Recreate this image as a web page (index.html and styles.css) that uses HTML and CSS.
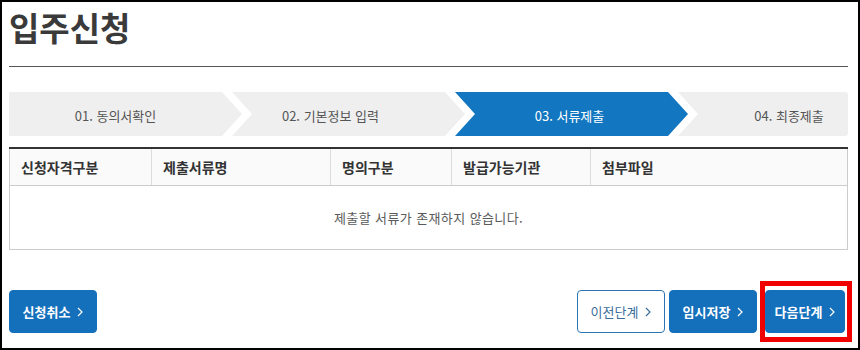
FILE: index.html
```html
<!DOCTYPE html>
<html lang="ko">
<head>
<meta charset="utf-8">
<title>입주신청</title>
<link rel="stylesheet" href="styles.css">
</head>
<body>
<div class="frame">
  <h1 class="title">입주신청</h1>
  <div class="rule"></div>

  <ol class="steps">
    <li class="step step-1"><span>01. 동의서확인</span></li>
    <li class="step step-2"><span>02. 기본정보 입력</span></li>
    <li class="step step-3 is-active"><span>03. 서류제출</span></li>
    <li class="step step-4"><span>04. 최종제출</span></li>
  </ol>

  <table class="docs">
    <colgroup>
      <col class="c1"><col class="c2"><col class="c3"><col class="c4"><col class="c5">
    </colgroup>
    <thead>
      <tr>
        <th>신청자격구분</th>
        <th>제출서류명</th>
        <th>명의구분</th>
        <th>발급가능기관</th>
        <th>첨부파일</th>
      </tr>
    </thead>
    <tbody>
      <tr>
        <td colspan="5" class="empty">제출할 서류가 존재하지 않습니다.</td>
      </tr>
    </tbody>
  </table>

  <div class="actions">
    <button class="btn btn-primary">신청취소<svg class="chev" viewBox="0 0 6 10"><path d="M1 1l4 4-4 4"/></svg></button>
    <div class="actions-right">
      <button class="btn btn-outline">이전단계<svg class="chev" viewBox="0 0 6 10"><path d="M1 1l4 4-4 4"/></svg></button>
      <button class="btn btn-primary">임시저장<svg class="chev" viewBox="0 0 6 10"><path d="M1 1l4 4-4 4"/></svg></button>
      <div class="highlight-wrap">
        <button class="btn btn-primary btn-next">다음단계<svg class="chev" viewBox="0 0 6 10"><path d="M1 1l4 4-4 4"/></svg></button>
        <div class="highlight"></div>
      </div>
    </div>
  </div>
</div>
</body>
</html>
```

FILE: styles.css
```css
html, body {
  margin: 0;
  padding: 0;
  background: #fff;
}

body {
  font-family: "Noto Sans CJK KR", "Noto Sans", sans-serif;
  color: #333;
}

.frame {
  box-sizing: border-box;
  width: 860px;
  height: 350px;
  border: 2px solid #000;
  padding: 0 10px 0 7px;
  position: relative;
  overflow: hidden;
}

.title {
  margin: 5px 0 0 0;
  font-size: 33px;
  line-height: 40px;
  font-weight: 700;
  color: #3a3a3a;
}

.rule {
  margin-top: 19px;
  border-top: 1px solid #555;
}

.steps {
  list-style: none;
  margin: 25px 0 0 0;
  padding: 0;
  display: flex;
  height: 44px;
}

.step {
  box-sizing: border-box;
  width: 233px;
  flex: none;
  height: 44px;
  background: #efefef;
  display: flex;
  align-items: center;
  justify-content: center;
  font-size: 13px;
  color: #555;
  white-space: nowrap;
  margin-left: -10px;
  clip-path: polygon(0 0, calc(100% - 20px) 0, 100% 50%, calc(100% - 20px) 100%, 0 100%, 20px 50%);
}

.step span {
  position: relative;
  top: 1px;
}

.step-1 {
  margin-left: 0;
  clip-path: polygon(0 0, calc(100% - 20px) 0, 100% 50%, calc(100% - 20px) 100%, 0 100%);
  padding-right: 20px;
}

.step-2 {
  padding-right: 36px;
}

.step-3 {
  padding-right: 4px;
}

.step-4 {
  flex: 1;
  width: auto;
  padding-left: 52px;
  border-radius: 0 3px 3px 0;
  clip-path: polygon(0 0, 100% 0, 100% 100%, 0 100%, 20px 50%);
}

.step.is-active {
  background: #1277c0;
  color: #fff;
}

.docs {
  margin-top: 11px;
  width: 100%;
  border-collapse: collapse;
  table-layout: fixed;
  font-size: 14px;
}

.c1 { width: 142px; }
.c2 { width: 179px; }
.c3 { width: 121px; }
.c4 { width: 139px; }

.docs thead tr {
  border-top: 2px solid #333;
}

.docs th {
  height: 36px;
  padding: 0 0 0 11px;
  text-align: left;
  font-weight: 700;
  color: #333;
  background: #fafafa;
  border-bottom: 1px solid #ccc;
  border-left: 1px solid #ddd;
  white-space: nowrap;
}

.docs th:first-child {
  border-left: 1px solid #ccc;
}

.docs th:last-child {
  border-right: 1px solid #ccc;
}

.docs td.empty {
  height: 63px;
  padding: 0;
  text-align: center;
  font-size: 13px;
  letter-spacing: 0.4px;
  color: #5a5a5a;
  border: 1px solid #ccc;
  border-top: none;
}

.actions {
  margin-top: 40px;
  display: flex;
  justify-content: space-between;
  align-items: flex-start;
}

.actions-right {
  display: flex;
  gap: 4px;
  margin-right: 3px;
}

.btn {
  box-sizing: border-box;
  height: 43px;
  padding: 0;
  border-radius: 4px;
  font-family: inherit;
  font-size: 13px;
  font-weight: 700;
  display: inline-flex;
  align-items: center;
  justify-content: center;
  gap: 7px;
  white-space: nowrap;
  cursor: pointer;
  margin: 0;
}

.btn-primary {
  background: #1570bc;
  border: 1px solid #1570bc;
  color: #fff;
  width: 88px;
}

.btn-outline {
  background: #fff;
  border: 1px solid #2d74b0;
  color: #3b6f9c;
  font-weight: 400;
  width: 88px;
}

.btn-next {
  width: 80px;
}

.chev {
  width: 6px;
  height: 10px;
  fill: none;
  stroke: currentColor;
  stroke-width: 1.2;
}

.highlight-wrap {
  position: relative;
  margin-left: 4px;
}

.highlight {
  position: absolute;
  left: -5px;
  top: -9px;
  width: 92px;
  height: 61px;
  box-sizing: border-box;
  border: 5px solid #f10000;
  pointer-events: none;
}
```
